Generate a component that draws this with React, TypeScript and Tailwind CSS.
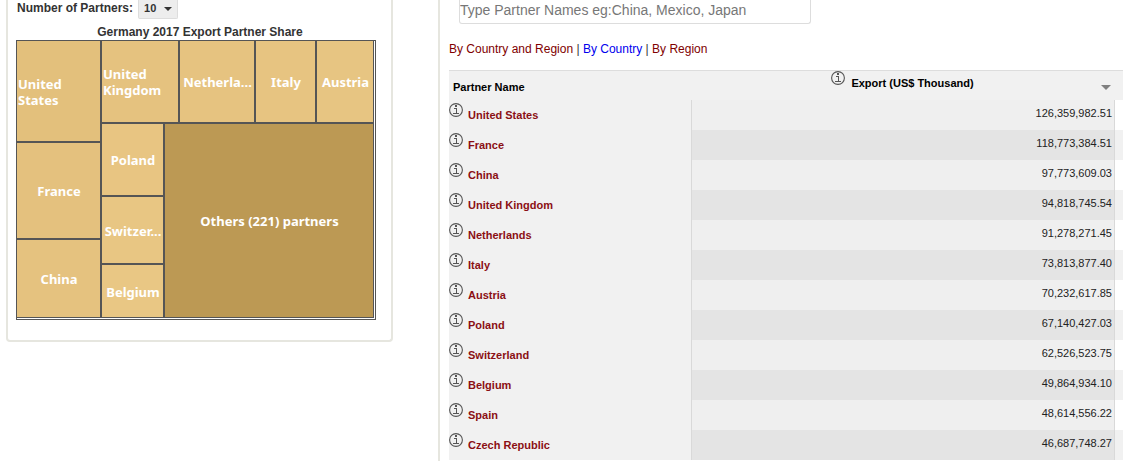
import { useState } from 'react';

const partners = [
  { name: 'United States', value: '126,359,982.51' },
  { name: 'France', value: '118,773,384.51' },
  { name: 'China', value: '97,773,609.03' },
  { name: 'United Kingdom', value: '94,818,745.54' },
  { name: 'Netherlands', value: '91,278,271.45' },
  { name: 'Italy', value: '73,813,877.40' },
  { name: 'Austria', value: '70,232,617.85' },
  { name: 'Poland', value: '67,140,427.03' },
  { name: 'Switzerland', value: '62,526,523.75' },
  { name: 'Belgium', value: '49,864,934.10' },
  { name: 'Spain', value: '48,614,556.22' },
  { name: 'Czech Republic', value: '46,687,748.27' },
];

function InfoIcon({ className = '' }: { className?: string }) {
  return (
    <svg className={`w-3.5 h-3.5 shrink-0 ${className}`} viewBox="0 0 14 14" fill="none" stroke="#555" aria-hidden="true">
      <circle cx="7" cy="7" r="6.4" strokeWidth="1.1" />
      <path d="M6 2h2v2H6zM5 5h3v5h2v1H4v-1h3V6H5z" fill="#555" stroke="none" />
    </svg>
  );
}

function Tile({ label, color }: { label: string; color: string }) {
  return (
    <div className={`flex items-center justify-center overflow-hidden pt-px pl-px ${color}`}>
      <span>{label}</span>
    </div>
  );
}

function Treemap() {
  return (
    <div className="border border-[#555] pr-px pb-px">
      <div className="grid grid-cols-[83fr_271fr] gap-0.5 h-[277px] bg-[#555] border-r border-b border-[#555] font-['Noto_Sans',sans-serif] text-[13px] leading-4 font-bold text-white">
        <div className="grid grid-rows-[100fr_95fr_77fr] gap-0.5">
          <Tile label="United States" color="bg-[#e3c07c]" />
          <Tile label="France" color="bg-[#e4c17e]" />
          <Tile label="China" color="bg-[#e5c27f]" />
        </div>
        <div className="grid grid-rows-[81fr_193fr] gap-0.5">
          <div className="grid grid-cols-[76fr_74fr_59fr_56fr] gap-0.5">
            <Tile label="United Kingdom" color="bg-[#e5c27f]" />
            <Tile label="Netherla..." color="bg-[#e6c380]" />
            <Tile label="Italy" color="bg-[#e7c481]" />
            <Tile label="Austria" color="bg-[#e7c582]" />
          </div>
          <div className="grid grid-cols-[61fr_208fr] gap-0.5">
            <div className="grid grid-rows-[71fr_66fr_52fr] gap-0.5">
              <Tile label="Poland" color="bg-[#e8c582]" />
              <Tile label="Switzer..." color="bg-[#e8c683]" />
              <Tile label="Belgium" color="bg-[#e9c784]" />
            </div>
            <Tile label="Others (221) partners" color="bg-[#bc9954]" />
          </div>
        </div>
      </div>
    </div>
  );
}

function SharePanel() {
  const [count, setCount] = useState('10');

  return (
    <section className="w-[387px] shrink-0 self-start border-2 border-t-0 border-[#e6e6df] rounded-b-sm pl-2 pr-[15px] pb-5">
      <div className="flex items-center h-[19px] gap-[5px] pl-px text-xs font-bold text-[#333]">
        <label htmlFor="count" className="leading-4 pb-1">Number of Partners:</label>
        <div className="relative h-[19px]">
          <select
            id="count"
            value={count}
            onChange={(e) => setCount(e.target.value)}
            className="appearance-none block w-10 h-[19px] pl-[5px] pb-0.5 border border-t-0 border-[#ddd] rounded-b-xs bg-[#ededed] text-[11px] leading-4 font-bold text-[#333]"
          >
            <option>10</option>
            <option>20</option>
            <option>50</option>
          </select>
          <svg className="absolute right-1.5 top-[7px] w-2 h-1 pointer-events-none" viewBox="0 0 8 4" fill="#333">
            <path d="M0 0h8L4 4z" />
          </svg>
        </div>
      </div>
      <h2 className="h-[21px] pt-[5px] pl-2 text-center text-xs leading-4 font-bold text-[#333]">
        Germany 2017 Export Partner Share
      </h2>
      <Treemap />
    </section>
  );
}

function PartnerTable() {
  return (
    <table className="w-full table-fixed border-collapse text-[11px]">
      <colgroup>
        <col className="w-[243px]" />
        <col />
        <col className="w-2" />
      </colgroup>
      <thead>
        <tr className="h-[30px] bg-[#f1f1f1] text-black">
          <th className="p-0 text-left">
            <div className="h-[30px] border-t border-[#ddd] pl-1 pt-2 leading-4">Partner Name</div>
          </th>
          <th className="p-0">
            <div className="flex items-start h-[30px] border-t border-[#ddd]">
              <div className="flex flex-1 justify-center gap-1.5 pl-3">
                <InfoIcon />
                <span className="leading-4 pt-1">Export (US$ Thousand)</span>
              </div>
              <button aria-label="Sort by export" className="mt-3.5 mr-1">
                <svg className="block w-2.5 h-[5px]" viewBox="0 0 10 5" fill="#808080">
                  <path d="M0 0h10L5 5z" />
                </svg>
              </button>
            </div>
          </th>
          <th className="p-0">
            <div className="h-[30px] border-t border-[#ddd]" />
          </th>
        </tr>
      </thead>
      <tbody>
        {partners.map((partner, index) => (
          <tr key={partner.name} className="h-[30px]">
            <td className="p-0 bg-[#f1f1f1]">
              <div className="flex items-start gap-[5px] h-[30px] border-r border-[#d9d9d9]">
                <InfoIcon className="mt-[3px]" />
                <a href="#partner" className="leading-[30px] font-bold text-[#8b0f14]">{partner.name}</a>
              </div>
            </td>
            <td className={`p-0 ${index % 2 ? 'bg-[#e4e4e4]' : 'bg-[#efefef]'}`}>
              <div className="h-[30px] border-r border-[#d9d9d9] pr-0.5 pt-[5px] text-right leading-4 text-[#222]">
                {partner.value}
              </div>
            </td>
            <td className={`p-0 ${index % 2 ? 'bg-[#f1f1f1]' : 'bg-white'}`} />
          </tr>
        ))}
      </tbody>
    </table>
  );
}

export default function App() {
  return (
    <div className="flex items-stretch h-screen overflow-hidden gap-[45px] pl-1.5 bg-white font-['Liberation_Sans',Arial,sans-serif]">
      <SharePanel />
      <main className="flex-1 min-w-0 border-l-2 border-[#e6e6df] pl-[9px]">
        <input
          type="text"
          aria-label="Partner names"
          placeholder="Type Partner Names eg:China, Mexico, Japan"
          className="block w-[352px] h-6 ml-2.5 pb-1 border border-t-0 border-[#ddd] rounded-b-[3px] text-sm placeholder:text-[#777] outline-none"
        />
        <nav className="pt-[17px] pb-[13px] text-xs leading-4 text-[#800000]">
          <a href="#all">By Country and Region</a> <span className="text-[#333]">|</span>{' '}
          <a href="#country" className="text-[#0000ee]">By Country</a> <span className="text-[#333]">|</span>{' '}
          <a href="#region">By Region</a>
        </nav>
        <PartnerTable />
      </main>
    </div>
  );
}
